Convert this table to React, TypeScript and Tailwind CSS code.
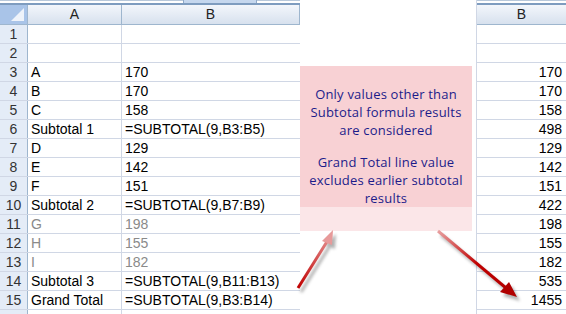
import React from "react";

type Row = { n: number; a: string; b: string; v: string; dim?: boolean };

const rows: Row[] = [
  { n: 1, a: "", b: "", v: "" },
  { n: 2, a: "", b: "", v: "" },
  { n: 3, a: "A", b: "170", v: "170" },
  { n: 4, a: "B", b: "170", v: "170" },
  { n: 5, a: "C", b: "158", v: "158" },
  { n: 6, a: "Subtotal 1", b: "=SUBTOTAL(9,B3:B5)", v: "498" },
  { n: 7, a: "D", b: "129", v: "129" },
  { n: 8, a: "E", b: "142", v: "142" },
  { n: 9, a: "F", b: "151", v: "151" },
  { n: 10, a: "Subtotal 2", b: "=SUBTOTAL(9,B7:B9)", v: "422" },
  { n: 11, a: "G", b: "198", v: "198", dim: true },
  { n: 12, a: "H", b: "155", v: "155", dim: true },
  { n: 13, a: "I", b: "182", v: "182", dim: true },
  { n: 14, a: "Subtotal 3", b: "=SUBTOTAL(9,B11:B13)", v: "535" },
  { n: 15, a: "Grand Total", b: "=SUBTOTAL(9,B3:B14)", v: "1455" },
];

const font = { fontFamily: '"Liberation Sans", Arial, sans-serif' };

function TopStrip({ tab }: { tab?: boolean }) {
  return (
    <div className="h-[5px] relative bg-white border-t border-[#b8c8da] border-b-2 border-b-[#7e9cbf]">
      {tab && <div className="absolute left-[183px] w-[74px] -top-px h-[3px] bg-[#c5d7ee] border-x border-[#8fa9c8]" />}
    </div>
  );
}

function LeftSheet() {
  return (
    <div className="w-[300px] shrink-0" style={font}>
      <TopStrip tab />
      <div className="flex h-[20px] bg-gradient-to-b from-[#f3f6fb] to-[#d7e1ee] border-b border-[#9eb6ce] text-[14px] text-[#222]">
        <div className="w-[28px] bg-[#a9c4e8] border-r border-[#9eb6ce] relative">
          <div className="absolute right-[3px] bottom-[3px] w-0 h-0 border-l-[13px] border-l-transparent border-b-[13px] border-b-white/80" />
        </div>
        <div className="w-[94px] border-r border-[#9eb6ce] flex items-center justify-center">A</div>
        <div className="flex-1 border-r border-[#9eb6ce] flex items-center justify-center">B</div>
      </div>
      {rows.map((r) => (
        <div key={r.n} className="flex h-[19px] border-b border-[#d0d7e5] text-[14px] leading-[18px]">
          <div className="w-[28px] bg-[#e4ecf7] border-r border-[#9eb6ce] text-center text-[#333]">{r.n}</div>
          <div className={`w-[94px] border-r border-[#d0d7e5] pl-[3px] ${r.dim ? "text-[#8a8a8a]" : "text-black"}`}>{r.a}</div>
          <div className={`flex-1 pl-[3px] whitespace-nowrap ${r.dim ? "text-[#8a8a8a]" : "text-black"}`}>{r.b}</div>
        </div>
      ))}
      <div className="flex h-[4px]">
        <div className="w-[28px] bg-[#e4ecf7] border-r border-[#9eb6ce]" />
        <div className="w-[94px] border-r border-[#d0d7e5]" />
      </div>
    </div>
  );
}

function Note() {
  return (
    <div className="w-[176px] shrink-0 flex flex-col">
      <div className="h-[66px] bg-white" />
      <div className="w-[172px] h-[141px] bg-[#f8d1d4] flex flex-col items-center pt-[19px] text-[#1c1c8a] text-[13px] leading-[18px] text-center tracking-[0.2px]" style={{ fontFamily: '"Comic Sans MS", "Open Sans", sans-serif' }}>
        <div>Only values other than</div>
        <div>Subtotal formula results</div>
        <div>are considered</div>
        <div className="h-[18px]" />
        <div>Grand Total line value</div>
        <div>excludes earlier subtotal</div>
        <div>results</div>
      </div>
      <div className="w-[172px] h-[24px] bg-[#fbe6e8]" />
    </div>
  );
}

function RightSheet() {
  return (
    <div className="flex-1 border-l border-[#d0d7e5]" style={font}>
      <TopStrip />
      <div className="h-[20px] bg-gradient-to-b from-[#f3f6fb] to-[#d7e1ee] border-b border-[#9eb6ce] text-[14px] text-[#222] flex items-center justify-center">B</div>
      {rows.map((r) => (
        <div key={r.n} className="h-[19px] border-b border-[#d0d7e5] text-[14px] leading-[18px] text-right pr-[4px] text-black">{r.v}</div>
      ))}
    </div>
  );
}

function Arrows() {
  return (
    <svg className="absolute inset-0 pointer-events-none" width={566} height={314}>
      <defs>
        <linearGradient id="g1" x1="298" y1="288" x2="333" y2="230" gradientUnits="userSpaceOnUse">
          <stop offset="0" stopColor="#c00000" />
          <stop offset="1" stopColor="#e8a0a0" />
        </linearGradient>
        <linearGradient id="g2" x1="438" y1="231" x2="517" y2="297" gradientUnits="userSpaceOnUse">
          <stop offset="0" stopColor="#e8a0a0" />
          <stop offset="0.5" stopColor="#c00000" />
          <stop offset="1" stopColor="#b00000" />
        </linearGradient>
        <filter id="sh" x="-50%" y="-50%" width="200%" height="200%">
          <feGaussianBlur stdDeviation="1.5" />
        </filter>
      </defs>
      <g opacity="0.45" filter="url(#sh)" transform="translate(3,4)">
        <line x1="298" y1="288" x2="328" y2="240" stroke="#555" strokeWidth="3" />
        <polygon points="333,230 322,241 332,245" fill="#555" />
        <line x1="438" y1="231" x2="506" y2="288" stroke="#555" strokeWidth="3" />
        <polygon points="517,297 500,292 509,282" fill="#555" />
      </g>
      <line x1="298" y1="288" x2="328" y2="240" stroke="url(#g1)" strokeWidth="3" />
      <polygon points="333,230 322,241 332,245" fill="#e79a9a" />
      <line x1="438" y1="231" x2="506" y2="288" stroke="url(#g2)" strokeWidth="3" />
      <polygon points="517,297 500,292 509,282" fill="#b00000" />
    </svg>
  );
}

export default function App() {
  return (
    <div className="relative w-[566px] h-[314px] overflow-hidden bg-white flex">
      <LeftSheet />
      <Note />
      <RightSheet />
      <Arrows />
    </div>
  );
}
